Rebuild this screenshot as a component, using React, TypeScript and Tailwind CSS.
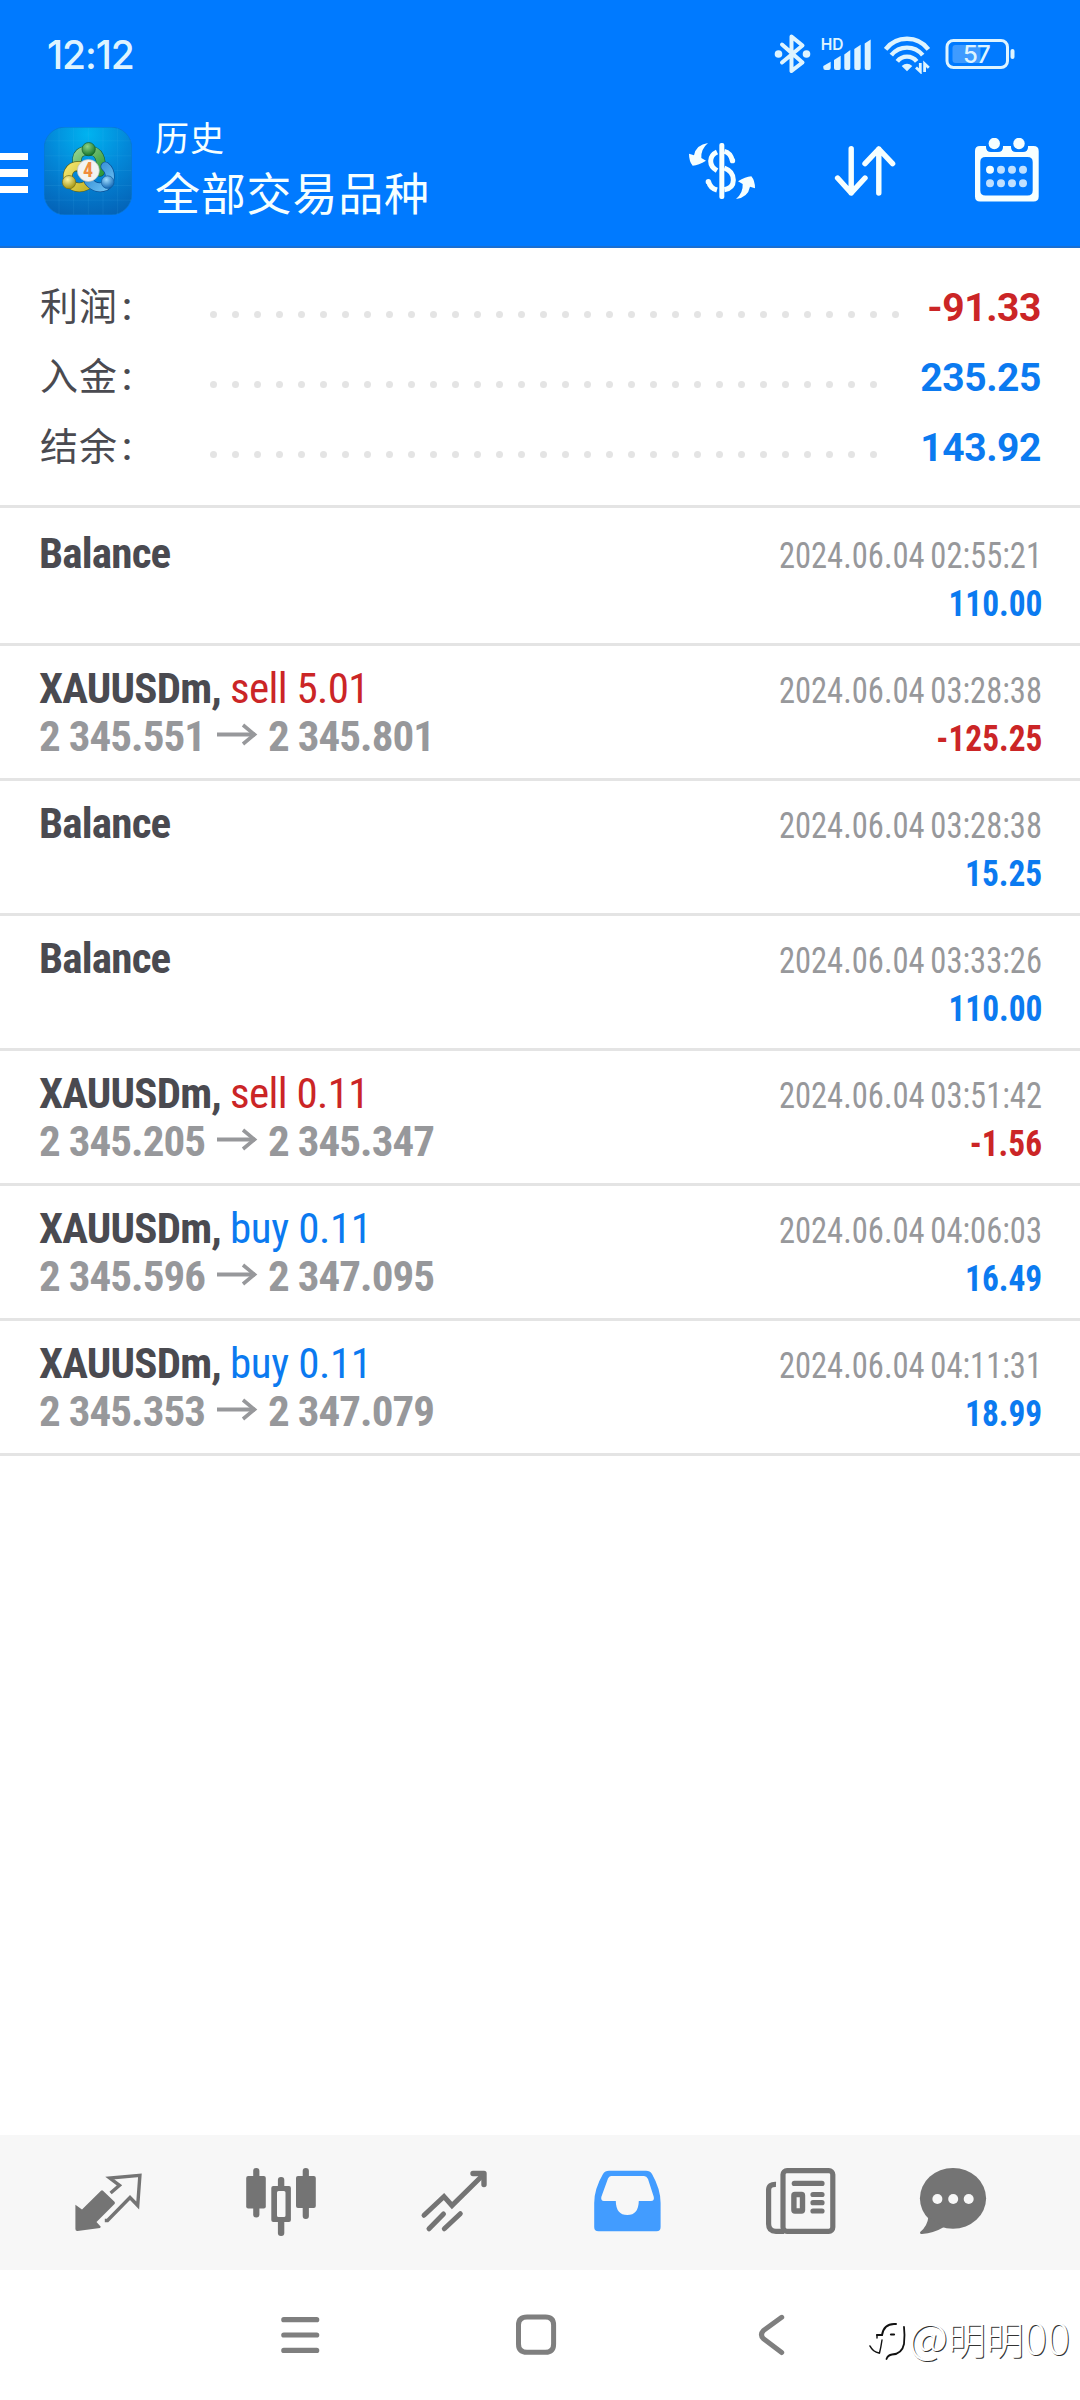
import { ReactNode } from "react"

interface ISummaryItem {
  label: string
  value: string
  dots: number
}

interface IHistoryItem {
  title: string
  side?: "sell" | "buy"
  volume?: string
  open?: string
  close?: string
  date: string
  amount: string
}

const summary: ISummaryItem[] = [
  { label: "利润", value: "-91.33", dots: 32 },
  { label: "入金", value: "235.25", dots: 31 },
  { label: "结余", value: "143.92", dots: 31 },
]

const history: IHistoryItem[] = [
  { title: "Balance", date: "2024.06.04 02:55:21", amount: "110.00" },
  {
    title: "XAUUSDm,",
    side: "sell",
    volume: "5.01",
    open: "2 345.551",
    close: "2 345.801",
    date: "2024.06.04 03:28:38",
    amount: "-125.25",
  },
  { title: "Balance", date: "2024.06.04 03:28:38", amount: "15.25" },
  { title: "Balance", date: "2024.06.04 03:33:26", amount: "110.00" },
  {
    title: "XAUUSDm,",
    side: "sell",
    volume: "0.11",
    open: "2 345.205",
    close: "2 345.347",
    date: "2024.06.04 03:51:42",
    amount: "-1.56",
  },
  {
    title: "XAUUSDm,",
    side: "buy",
    volume: "0.11",
    open: "2 345.596",
    close: "2 347.095",
    date: "2024.06.04 04:06:03",
    amount: "16.49",
  },
  {
    title: "XAUUSDm,",
    side: "buy",
    volume: "0.11",
    open: "2 345.353",
    close: "2 347.079",
    date: "2024.06.04 04:11:31",
    amount: "18.99",
  },
]

const amountColor = (value: string) => (value.startsWith("-") ? "text-[#cb2526]" : "text-[#0b7af0]")

const StatusBar = () => (
  <div className="flex h-[108px] items-center justify-between pl-[47px] pr-[65px] text-[#def4ff]">
    <div className="text-[39px] leading-none font-medium tracking-[-1.1px] font-['Inter',sans-serif]">12:12</div>
    <div className="flex items-center">
      <svg className="h-[40px] w-[37px]" viewBox="773.5 34 37 40" fill="none" stroke="currentColor" strokeWidth="4" strokeLinecap="round" strokeLinejoin="round">
        <path d="M781.5 44.5 L802 62.5 L791 71 V36.5 L802 45.5 L781.5 62.5" />
        <g fill="currentColor" stroke="none">
          <circle cx="778" cy="54" r="3.8" />
          <circle cx="806" cy="54" r="3.8" />
        </g>
      </svg>
      <svg className="ml-[10px] h-[40px] w-[51px]" viewBox="821 34 51 40" fill="currentColor">
        <text x="820.8" y="50" fontSize="15.5" fontWeight="600" fontFamily="Inter, sans-serif">
          HD
        </text>
        <path d="M823.3 66 L830.7 61.7 V68 Q830.7 70 828.5 70 H825.5 Q823.3 70 823.3 68Z" />
        <path d="M834 60 L840.7 55.7 V68 Q840.7 70 839 70 H836 Q834 70 834 68Z" />
        <path d="M844.3 54.5 L850.3 50 V68 Q850.3 70 848.5 70 H846 Q844.3 70 844.3 68Z" />
        <path d="M854.3 49 L860.7 44.7 V68 Q860.7 70 859 70 H856 Q854.3 70 854.3 68Z" />
        <path d="M864.7 43.5 L870.7 39.5 V68 Q870.7 70 869 70 H866.5 Q864.7 70 864.7 68Z" />
      </svg>
      <svg className="ml-[12px] h-[40px] w-[47px]" viewBox="884 34 47 40" fill="none" stroke="currentColor" strokeWidth="4.4">
        <path d="M885.6 49.3 A27 27 0 0 1 928.4 49.3" />
        <path d="M891.3 55.2 A20 20 0 0 1 922.7 55.2" />
        <path d="M897.3 61.3 A12.4 12.4 0 0 1 916.7 61.3" />
        <path d="M901.7 66 Q907 61.5 912.3 66 L907 71.2Z" fill="currentColor" stroke="none" />
        <path d="M920.3 63 V71.5 L916 67.5 M924.6 72 V63.8 L928.8 67.8" strokeWidth="2.8" />
      </svg>
      <svg className="ml-[14px] h-[40px] w-[70px]" viewBox="944.5 34 70 40">
        <rect x="946.5" y="40.5" width="60.5" height="27" rx="6.5" fill="none" stroke="currentColor" strokeWidth="3" />
        <path d="M955 45 H980 V63 H955 Q952 63 952 60 V48 Q952 45 955 45Z" fill="#3f9bff" />
        <rect x="1010" y="49" width="4" height="10" rx="2" fill="currentColor" />
        <text x="976" y="62.8" textAnchor="middle" fontSize="24" fontWeight="500" fontFamily="Inter, sans-serif" letterSpacing="-0.8" fill="currentColor">
          57
        </text>
      </svg>
    </div>
  </div>
)

const AppLogo = () => (
  <svg className="size-[88px]" viewBox="12 21.5 264 264">
    <defs>
      <radialGradient id="logo-bg" cx="0.5" cy="0.08" r="0.95">
        <stop offset="0" stopColor="#00b3f0" />
        <stop offset="0.5" stopColor="#0387d8" />
        <stop offset="1" stopColor="#0464b8" />
      </radialGradient>
      <linearGradient id="logo-green" x1="0" y1="0" x2="1" y2="1">
        <stop offset="0" stopColor="#8fd08a" />
        <stop offset="1" stopColor="#2f9a3a" />
      </linearGradient>
      <linearGradient id="logo-yellow" x1="0" y1="0" x2="1" y2="1">
        <stop offset="0" stopColor="#f0e36a" />
        <stop offset="1" stopColor="#c6b62a" />
      </linearGradient>
      <linearGradient id="logo-blue" x1="0" y1="0" x2="1" y2="1">
        <stop offset="0" stopColor="#2b86cf" />
        <stop offset="1" stopColor="#6cc0f4" />
      </linearGradient>
      <radialGradient id="head-green" cx="0.4" cy="0.3" r="0.7">
        <stop offset="0" stopColor="#8cd488" />
        <stop offset="1" stopColor="#14742a" />
      </radialGradient>
      <radialGradient id="head-yellow" cx="0.4" cy="0.3" r="0.7">
        <stop offset="0" stopColor="#fbf4a0" />
        <stop offset="1" stopColor="#a39410" />
      </radialGradient>
      <radialGradient id="head-blue" cx="0.4" cy="0.3" r="0.7">
        <stop offset="0" stopColor="#9fdcff" />
        <stop offset="1" stopColor="#1468b4" />
      </radialGradient>
    </defs>
    <rect x="12.5" y="22" width="263" height="263" rx="62" fill="url(#logo-bg)" stroke="#0a76cc" strokeWidth="2" />
    <path d="M57 24 V284 M101 24 V284 M145 24 V284 M189 24 V284 M233 24 V284 M14 63 H274 M14 108 H274 M14 152 H274 M14 197 H274 M14 241 H274" stroke="#5cc4f5" strokeOpacity="0.16" strokeWidth="2" />
    <g fill="none" strokeLinecap="round">
      <path d="M114 142 C102 98 128 92 147 92 C176 92 188 118 180 156" stroke="#1c5f3c" strokeWidth="29" />
      <path d="M114 142 C102 98 128 92 147 92 C176 92 188 118 180 156" stroke="url(#logo-green)" strokeWidth="25" />
      <path d="M118 138 C84 138 76 168 90 190 C102 204 122 206 140 197" stroke="#5a6420" strokeWidth="29" />
      <path d="M118 138 C84 138 76 168 90 190 C102 204 122 206 140 197" stroke="url(#logo-yellow)" strokeWidth="25" />
      <path d="M196 140 C216 156 212 188 196 199 C178 207 158 200 146 184" stroke="#0c4f94" strokeWidth="29" />
      <path d="M196 140 C216 156 212 188 196 199 C178 207 158 200 146 184" stroke="url(#logo-blue)" strokeWidth="25" />
    </g>
    <circle cx="146" cy="88" r="20" fill="url(#head-green)" stroke="#175c2c" strokeWidth="2" />
    <circle cx="87" cy="187" r="20" fill="url(#head-yellow)" stroke="#6d6a1c" strokeWidth="2" />
    <circle cx="203" cy="187" r="19" fill="url(#head-blue)" stroke="#115a9c" strokeWidth="2" />
    <circle cx="145" cy="152" r="33" fill="#f3f3f1" stroke="#b9bdb8" strokeWidth="2" />
    <text x="144" y="173" textAnchor="middle" fontSize="60" fontWeight="700" fontFamily="'Roboto Condensed', sans-serif" fill="#f08c3c">
      4
    </text>
  </svg>
)

const Header = () => (
  <header className="h-[248px] border-b-2 border-[#1a6fd2] bg-[#007aff]">
    <StatusBar />
    <div className="flex h-[126px] items-center pr-[40px] text-[#f6ffff]">
      <div className="mt-1 flex w-[28px] flex-col gap-[9px]">
        <span className="h-[7.5px] bg-white" />
        <span className="h-[7.5px] bg-white" />
        <span className="h-[7.5px] bg-white" />
      </div>
      <div className="ml-4">
        <AppLogo />
      </div>
      <div className="ml-[23px] font-['Roboto','Noto_Sans_CJK_SC',sans-serif]">
        <div className="text-[34px] leading-[49px] tracking-[1px]">历史</div>
        <div className="text-[45px] leading-[63px] tracking-[0.8px]">全部交易品种</div>
      </div>
      <svg className="ml-auto h-[58px] w-[68px]" viewBox="24 66 204 174" fill="currentColor">
        <rect x="118" y="69" width="15" height="168" rx="6" />
        <g fill="none" stroke="currentColor" strokeWidth="15">
          <path d="M111 96 Q92 105 92 123 Q92 141 111 152" />
          <path d="M133 94 Q151 98 157 121" />
          <path d="M133 144 Q160 154 160 180 Q160 205 133 209" />
          <path d="M86 185 Q90 204 111 210" />
        </g>
        <circle cx="157.5" cy="122" r="8" />
        <circle cx="85" cy="185" r="8" />
        <path d="M84 69 Q48 74 42 106 L27 101 Q27 124 38 137 Q56 135 78 122 L64 114 Q62 88 84 69Z" />
        <path d="M168 237 Q204 232 210 200 L225 205 Q225 182 214 169 Q196 171 174 184 L188 192 Q190 218 168 237Z" />
      </svg>
      <svg className="ml-[78px] h-[52px] w-[62px]" viewBox="834 145 62 52" fill="none" stroke="currentColor" strokeWidth="5.4" strokeLinecap="round" strokeLinejoin="round">
        <path d="M851.2 148.7 V193 M837.6 178 L851.2 193 L865 178" />
        <path d="M878.8 193 V149 M865 163.6 L878.8 149 L892.6 163.6" />
      </svg>
      <svg className="ml-[78px] h-[66px] w-[66px]" viewBox="974 138 66 66">
        <path
          fillRule="evenodd"
          fill="currentColor"
          d="M980 146 H986 V147 Q986 152 991 152 H998 Q1003 152 1003 147 V146 H1011 V147 Q1011 152 1016 152 H1023 Q1028 152 1028 147 V146 H1033.5 Q1038.7 146 1038.7 151 V196.5 Q1038.7 201.6 1033.5 201.6 H980 Q975 201.6 975 196.5 V151 Q975 146 980 146Z M985.5 157 Q980.3 157 980.3 162 V190.5 Q980.3 195.6 985.5 195.6 H1027.5 Q1032.7 195.6 1032.7 190.5 V162 Q1032.7 157 1027.5 157Z"
        />
        <g fill="currentColor">
          <circle cx="994.3" cy="143.5" r="5.7" />
          <circle cx="1019" cy="143.5" r="5.7" />
          <circle cx="990" cy="169.7" r="4" />
        </g>
        <g fill="#bfe0ff">
          <circle cx="1001" cy="169.7" r="4" />
          <circle cx="1012" cy="169.7" r="4" />
          <circle cx="1023" cy="169.7" r="4" />
          <circle cx="990" cy="183.3" r="4" />
          <circle cx="1001" cy="183.3" r="4" />
          <circle cx="1012" cy="183.3" r="4" />
          <circle cx="1023" cy="183.3" r="4" />
        </g>
      </svg>
    </div>
  </header>
)

const Summary = () => (
  <section className="h-[260px] border-b-[3px] border-[#e4e4e4] pt-[25px] font-['Roboto','Noto_Sans_CJK_SC',sans-serif]">
    {summary.map((item) => (
      <div key={item.label} className="flex h-[70px] pl-10 pr-[39px] leading-[70px]">
        <div className="-mt-px w-[170px] text-[38px] tracking-[1px] text-[#4a4a50]">
          {item.label}
          <span className="ml-[4px] font-medium">:</span>
        </div>
        <div className="mt-[38px] flex gap-[15px]">
          {Array.from({ length: item.dots }, (_, i) => (
            <span key={i} className="size-[7px] rounded-full bg-[#e4e4e4]" />
          ))}
        </div>
        <div className={`ml-auto text-[39px] font-bold tracking-[-0.4px] ${amountColor(item.value)}`}>{item.value}</div>
      </div>
    ))}
  </section>
)

const HistoryRow = ({ item }: { item: IHistoryItem }) => (
  <li className="h-[135px] border-b-[3px] border-[#e4e4e4] pl-[39px] pr-[38px] pt-[18px]">
    <div className="flex h-12 items-baseline justify-between leading-[48px]">
      <div className="text-[43px]">
        <span className="font-bold tracking-[-0.8px] text-[#4a4a50]">{item.title}</span>
        {item.side && (
          <span
            className={
              item.side === "sell"
                ? "ml-[9px] tracking-[-0.6px] text-[#cb2526]"
                : "ml-[9px] tracking-[-0.4px] text-[#0b7af0]"
            }
          >
            {item.side} {item.volume}
          </span>
        )}
      </div>
      <div className="origin-right scale-x-[0.88] text-[37px] [word-spacing:-2px] text-[#97989b]">{item.date}</div>
    </div>
    <div className="flex h-12 items-baseline justify-between leading-[48px]">
      <div className="flex items-baseline text-[43px] font-bold tracking-[-0.95px] text-[#97989b]">
        {item.open ? (
          <>
            <span className="w-[178px]">{item.open}</span>
            <svg className="h-[28px] w-[41px]" viewBox="0 0 41 28" fill="none" stroke="currentColor" strokeWidth="4">
              <path d="M0 11.5 H38" />
              <path d="M26 2 L37.5 11.5 L26 21" strokeWidth="3.6" />
            </svg>
            <span className="ml-[10px]">{item.close}</span>
          </>
        ) : (
          <span>&nbsp;</span>
        )}
      </div>
      <div className={`origin-right scale-x-[0.927] text-[36px] font-bold ${amountColor(item.amount)}`}>{item.amount}</div>
    </div>
  </li>
)

interface ITabIcon {
  name: string
  active?: boolean
  viewBox: string
  icon: ReactNode
}

// every icon is drawn on the bar's own 1080px wide grid
const tabs: ITabIcon[] = [
  {
    name: "quotes",
    viewBox: "72 46 72 73",
    icon: (
      <>
        <path d="M75.4 84.7 L82 89.6 L101 70.7 Q102 69.7 103 70.7 L114.5 81.8 Q115.5 83 114.5 84 L96.5 102 L100.8 106.8 L100 108 L77.5 110.9 Q75.4 111 75.4 109Z" fill="currentColor" />
        <path d="M110.6 73 L119.5 65.3 L109.8 58 L139.9 55.3 L137.7 85.5 L130 77.5 L107.5 100.5 H104.8" fill="none" stroke="currentColor" strokeWidth="3.4" />
      </>
    ),
  },
  {
    name: "charts",
    viewBox: "245 46 72 73",
    icon: (
      <g fill="currentColor">
        <rect x="253.2" y="48" width="6.2" height="49.5" rx="3" />
        <rect x="246.2" y="56" width="19.6" height="32.5" rx="2" />
        <rect x="302.7" y="48" width="6.2" height="51" rx="3" />
        <rect x="296" y="56" width="19.8" height="32" rx="2" />
        <rect x="277.9" y="57" width="6.4" height="12" rx="3" />
        <rect x="277.9" y="98" width="6.4" height="18" rx="3" />
        <path fillRule="evenodd" d="M273 66 H289 Q290.9 66 290.9 68 V100 Q290.9 102 289 102 H273.3 Q271.3 102 271.3 100 V68 Q271.3 66 273.3 66Z M278.5 71 Q277 71 277 72.5 V95.5 Q277 97 278.5 97 H284 Q285.5 97 285.5 95.5 V72.5 Q285.5 71 284 71Z" />
      </g>
    ),
  },
  {
    name: "trade",
    viewBox: "418 46 72 73",
    icon: (
      <g fill="none" stroke="currentColor" strokeWidth="5" strokeLinecap="round">
        <path d="M424 95.3 L444 76.5 L452 85.5 L482.5 55.5" />
        <path d="M473 53.5 H484 V64.5" strokeWidth="5.4" strokeLinejoin="round" />
        <path d="M429 108.8 L443.5 94 M444.3 108.8 L460.3 93.7" />
      </g>
    ),
  },
  {
    name: "history",
    active: true,
    viewBox: "591 46 72 73",
    icon: (
      <path
        fillRule="evenodd"
        fill="currentColor"
        d="M609 50.7 H646 Q650 50.7 652 54 Q660.6 69 660.6 83 V107 Q660.6 111.3 656.5 111.3 H598.5 Q594.2 111.3 594.2 107 V83 Q594.2 69 603 54 Q605 50.7 609 50.7Z M611 56 Q609 56 608 58.5 L601.3 77 Q600.7 81 604 81 H615.8 Q616 95 627.3 95 Q638.5 95 638.8 81 H651 Q654.5 81 653.8 77 L648 59 Q646.5 56 644 56Z"
      />
    ),
  },
  {
    name: "news",
    viewBox: "764 46 72 73",
    icon: (
      <g fill="none" stroke="currentColor" strokeWidth="5.2">
        <rect x="783" y="50.6" width="49.8" height="60.7" rx="4" />
        <path d="M776 64.3 Q768.6 64 768.6 70 V104 Q768.6 111.3 776 111.3 H784" />
        <path d="M794.3 63.4 H822" strokeLinecap="round" />
        <path d="M813 74.5 H822 M813 82.7 H822 M813 91 H822" strokeLinecap="round" />
        <rect x="793.9" y="74.5" width="8.6" height="16.5" rx="1" strokeWidth="5.4" />
      </g>
    ),
  },
  {
    name: "messages",
    viewBox: "916 46 72 73",
    icon: (
      <>
        <ellipse cx="953" cy="78.3" rx="33.1" ry="30.4" fill="currentColor" />
        <path d="M928.4 97 Q927.5 106 920.2 112 Q919.5 114 922 114 Q934 113 944 107Z" fill="currentColor" />
        <g fill="#f7f7f7">
          <circle cx="937.4" cy="79" r="5" />
          <circle cx="953.2" cy="79" r="5" />
          <circle cx="968.7" cy="79" r="5" />
        </g>
      </>
    ),
  },
]

const TabBar = () => (
  <nav className="flex h-[135px] items-center bg-[#f7f7f7] pl-[72px]">
    {tabs.map((tab) => (
      <svg
        key={tab.name}
        viewBox={tab.viewBox}
        className={`mr-[101px] h-[73px] w-[72px] shrink-0 nth-5:mr-[80px] last:mr-0 ${tab.active ? "text-[#429cff]" : "text-[#747474]"}`}
      >
        {tab.icon}
      </svg>
    ))}
  </nav>
)

const SystemNav = () => (
  <div className="relative flex h-[130px] items-start pl-[278px] pt-[42px] text-[#7f7f7f]">
    <svg className="h-[46px] w-[44px]" viewBox="278 192 44 46" fill="none" stroke="currentColor" strokeWidth="5.2" strokeLinecap="round">
      <path d="M283.8 199.7 H316.7 M283.8 215 H316.7 M283.8 230.4 H316.7" />
    </svg>
    <svg className="ml-[192px] h-[46px] w-[44px]" viewBox="514 192 44 46" fill="none" stroke="currentColor" strokeWidth="5">
      <path d="M527 197 H545.5 Q553.6 197 553.6 205 V224 Q553.6 232.3 545.5 232.3 H527 Q518.5 232.3 518.5 224 V205 Q518.5 197 527 197Z" />
    </svg>
    <svg className="ml-[198px] h-[46px] w-[32px]" viewBox="756 192 32 46" fill="none" stroke="currentColor" strokeWidth="5" strokeLinecap="round" strokeLinejoin="round">
      <path d="M781.7 197.3 L763.5 210.5 Q759.5 214.7 763.5 218.8 L781.7 232.5" />
    </svg>
    <div className="absolute right-[10px] bottom-[37px] flex items-center text-white">
      <svg className="mt-[10px] h-[42px] w-[40px]" viewBox="0 0 40 42" fill="none" stroke="#111" strokeLinecap="round">
        <path d="M8 14 H13 Q15 3 25 3 H27" strokeWidth="2" />
        <path d="M22 13.5 H25" strokeWidth="2.2" />
        <path d="M8 14 V17 M13 19 Q12 26 10.5 32" strokeWidth="1.4" />
        <path d="M1 25 Q4 31 10 32" strokeWidth="1.6" />
        <path d="M35 6 Q36 14 35 23 Q33 33 23 33.5 Q19 34 17.5 38" strokeWidth="1.8" />
      </svg>
      <div className="flex items-baseline leading-[50px] font-light font-['Noto_Sans_CJK_SC',sans-serif] [text-shadow:1px_1px_0_#333]">
        <span className="text-[43px]">@</span>
        <span className="text-[38px]">明明</span>
        <span className="text-[43px]">00</span>
      </div>
    </div>
  </div>
)

const App = () => {
  return (
    <div className="flex h-[2400px] w-[1080px] flex-col overflow-hidden bg-white">
      <Header />
      <Summary />
      <ul className="flex-1 pt-[3px] font-['Roboto_Condensed',sans-serif]">
        {history.map((item, i) => (
          <HistoryRow key={i} item={item} />
        ))}
      </ul>
      <TabBar />
      <SystemNav />
    </div>
  )
}

export default App
